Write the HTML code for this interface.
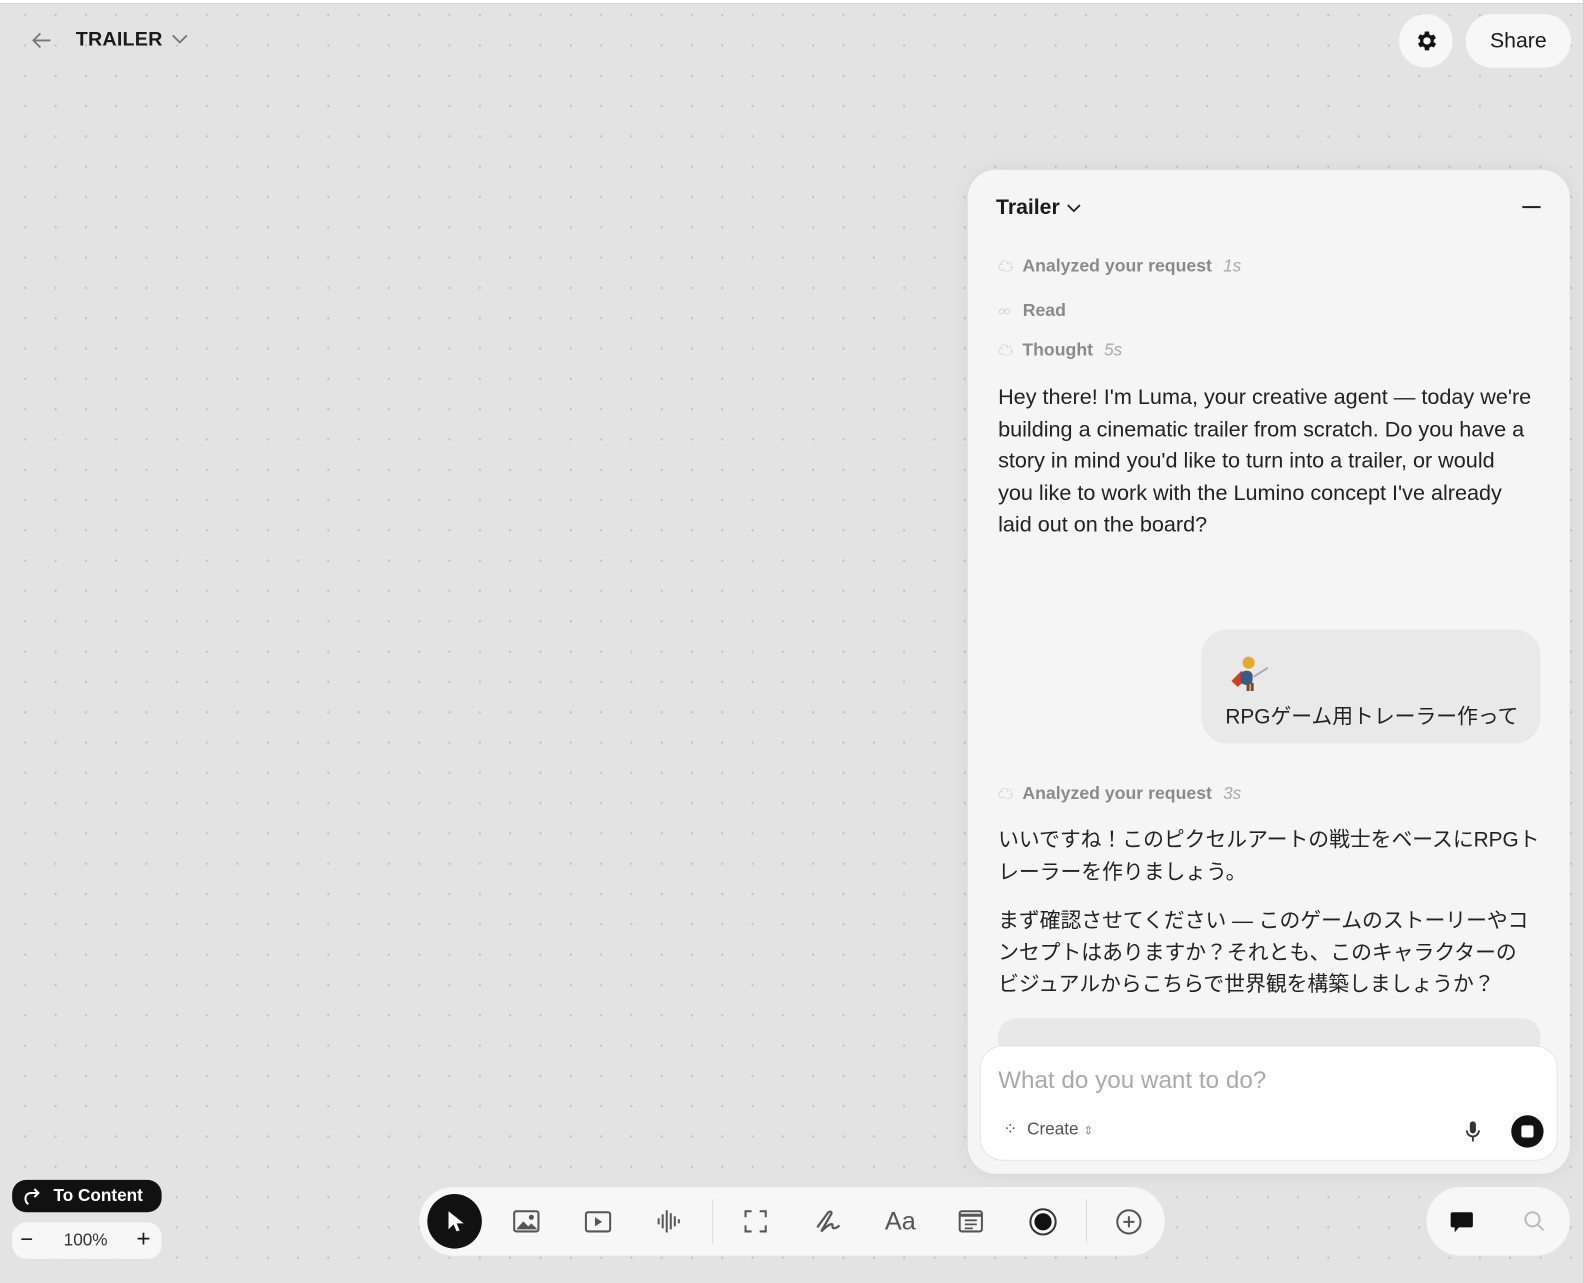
<!DOCTYPE html>
<html><head><meta charset="utf-8"><style>
*{box-sizing:border-box;margin:0;padding:0}
body{width:1584px;height:1270px;overflow:hidden;background:#e3e3e3;font-family:"Liberation Sans","Noto Sans CJK JP",sans-serif;position:relative;color:#1a1a1a}
#w{position:absolute;left:0;top:0;width:1568px;height:1257px;transform:scale(1.0102);transform-origin:0 0}
.dots{position:absolute;inset:0;background-image:radial-gradient(circle,#c4c4c4 1px,transparent 1.3px);background-size:30px 30px;background-position:10px 0px}
.topline{position:absolute;left:0;top:0;width:1568px;height:4px;background:#fff;border-bottom:1px solid #cfcfcf}
.rside{position:absolute;left:1567px;top:0;width:20px;height:1270px;background:#e3e3e3;border-left:1px solid #cfcfcf}
.abs{position:absolute}
.panel{left:958px;top:168px;width:596px;height:994px;background:#f5f5f5;border-radius:28px;box-shadow:0 0 20px rgba(0,0,0,.06)}
.meta{color:#8a8a8a;font-size:17.5px;display:flex;align-items:center;gap:9px;font-weight:700}
.meta i{font-style:italic;color:#aaa;font-size:17px;margin-left:2px;font-weight:400}
.p{font-size:20.6px;line-height:31.5px;color:#222}
.en{font-size:21.4px;white-space:nowrap}
.pill{background:#f7f7f7;border-radius:26px}
.tb svg{position:absolute}
</style></head><body>
<div id="w">
<div class="dots"></div>
<div class="topline"></div>

<svg class="abs" style="left:30px;top:30px" width="22" height="20" viewBox="0 0 22 20"><path d="M20 10H3M10 3L3 10l7 7" fill="none" stroke="#777" stroke-width="1.8"/></svg>
<div class="abs" style="left:75px;top:28px;font-size:19.5px;font-weight:700;letter-spacing:.2px">TRAILER</div>
<svg class="abs" style="left:169px;top:33px" width="18" height="12" viewBox="0 0 18 12"><path d="M2 2l7 7 7-7" fill="none" stroke="#777" stroke-width="1.8"/></svg>

<div class="abs pill" style="left:1385px;top:14px;width:53px;height:53px;border-radius:50%"></div>
<svg class="abs" style="left:1399px;top:28px" width="25" height="25" viewBox="0 0 24 24"><path fill="#111" d="M19.4 13a7.5 7.5 0 000-2l2.1-1.6-2-3.5-2.5 1a7.4 7.4 0 00-1.7-1L15 3h-4l-.4 2.7a7.4 7.4 0 00-1.7 1l-2.5-1-2 3.5L6.6 11a7.5 7.5 0 000 2l-2.1 1.6 2 3.5 2.5-1a7.4 7.4 0 001.7 1L11 21h4l.4-2.7a7.4 7.4 0 001.7-1l2.5 1 2-3.5zM13 15.5A3.5 3.5 0 1113 8.5a3.5 3.5 0 010 7z"/></svg>
<div class="abs pill" style="left:1451px;top:14px;width:104px;height:53px;font-size:21px;line-height:53px;text-align:center">Share</div>

<div class="abs panel"></div>
<div class="abs" style="left:986px;top:194px;font-size:21px;font-weight:700">Trailer</div>
<svg class="abs" style="left:1055px;top:200px" width="16" height="12" viewBox="0 0 16 12"><path d="M2 3l6 6 6-6" fill="none" stroke="#222" stroke-width="1.8"/></svg>
<div class="abs" style="left:1507px;top:204px;width:18px;height:2px;background:#222"></div>

<div class="abs meta" style="left:988px;top:253px"><span style="font-size:15px;color:#bbb;font-weight:400">☁</span>Analyzed your request<i>1s</i></div>
<div class="abs meta" style="left:988px;top:297px"><span style="font-size:12px;color:#bbb;letter-spacing:-2px;font-weight:400">○○</span>&nbsp;Read</div>
<div class="abs meta" style="left:988px;top:336px"><span style="font-size:15px;color:#bbb;font-weight:400">☁</span>Thought<i>5s</i></div>

<div class="abs p en" style="left:988px;top:378px">Hey there! I'm Luma, your creative agent — today we're<br>building a cinematic trailer from scratch. Do you have a<br>story in mind you'd like to turn into a trailer, or would<br>you like to work with the Lumino concept I've already<br>laid out on the board?</div>

<div class="abs" style="left:1189px;top:623px;width:336px;height:113px;background:#e9e9e9;border-radius:26px"></div>
<svg class="abs" style="left:1213px;top:644px" width="46" height="42" viewBox="0 0 46 42"><path d="M6 30l10-10 4 10-8 6z" fill="#c8431e"/><rect x="15" y="20" width="12" height="14" rx="5" fill="#3a5a8a"/><circle cx="23" cy="12" r="6" fill="#e8a838"/><rect x="21" y="32" width="3" height="8" fill="#7a4a22"/><rect x="25" y="32" width="3" height="8" fill="#7a4a22"/><path d="M28 26l14-9" stroke="#aab" stroke-width="2"/></svg>
<div class="abs" style="left:1213px;top:692px;font-size:20.6px;color:#222">RPGゲーム用トレーラー作って</div>

<div class="abs meta" style="left:988px;top:775px"><span style="font-size:15px;color:#bbb;font-weight:400">☁</span>Analyzed your request<i>3s</i></div>
<div class="abs p" style="left:988px;top:816px;width:540px">いいですね！このピクセルアートの戦士をベースにRPGトレーラーを作りましょう。</div>
<div class="abs p" style="left:988px;top:896px;width:530px">まず確認させてください — このゲームのストーリーやコンセプトはありますか？それとも、このキャラクターのビジュアルからこちらで世界観を構築しましょうか？</div>
<div class="abs" style="left:988px;top:1008px;width:537px;height:40px;background:#e8e8e8;border-radius:18px"></div>

<div class="abs" style="left:970px;top:1035px;width:572px;height:114px;background:#fff;border-radius:22px;border:1px solid #e4e4e4"></div>
<div class="abs" style="left:988px;top:1056px;font-size:24px;color:#aaa">What do you want to do?</div>
<div class="abs" style="left:993px;top:1108px;font-size:17px;color:#555">⁘&nbsp;&nbsp;Create <span style="font-size:12px;color:#999">⇕</span></div>
<svg class="abs" style="left:1450px;top:1108px" width="16" height="24" viewBox="0 0 16 24"><rect x="5" y="2" width="6" height="12" rx="3" fill="#333"/><path d="M2 11a6 6 0 0012 0M8 17v5" stroke="#333" stroke-width="1.8" fill="none"/></svg>
<div class="abs" style="left:1496px;top:1104px;width:32px;height:32px;border-radius:50%;background:#111"></div>
<div class="abs" style="left:1506px;top:1114px;width:12px;height:12px;border-radius:2px;background:#fff"></div>

<div class="abs" style="left:12px;top:1168px;width:148px;height:32px;background:#111;border-radius:14px;color:#fff;font-size:17px;font-weight:700;line-height:32px;padding-left:41px">To Content</div>
<svg class="abs" style="left:20px;top:1173px" width="22" height="22" viewBox="0 0 22 22"><path d="M8 19c-4-3-4-10 2-11h8M14 4l4 4-4 4" fill="none" stroke="#fff" stroke-width="2"/></svg>
<div class="abs pill" style="left:12px;top:1210px;width:148px;height:36px;border-radius:14px"></div>
<div class="abs" style="left:20px;top:1214px;font-size:22px">−</div>
<div class="abs" style="left:63px;top:1218px;font-size:17px;color:#333">100%</div>
<div class="abs" style="left:135px;top:1213px;font-size:24px">+</div>

<div class="abs pill tb" style="left:415px;top:1175px;width:738px;height:68px;border-radius:34px">
<div class="abs" style="left:8px;top:7px;width:54px;height:54px;border-radius:50%;background:#111"></div>
<svg style="left:25px;top:22px" width="20" height="24" viewBox="0 0 20 24"><path d="M4 2v18l5-5 3 7 3-1-3-7h7z" fill="#fff"/></svg>
<svg style="left:92px;top:22px" width="28" height="24" viewBox="0 0 28 24"><rect x="2" y="2" width="24" height="20" rx="2" fill="none" stroke="#555" stroke-width="2"/><path d="M4 20l7-8 5 5 3-3 6 6z" fill="#555"/><circle cx="19" cy="8" r="2.5" fill="#555"/></svg>
<svg style="left:163px;top:23px" width="28" height="24" viewBox="0 0 28 24"><rect x="2" y="2" width="24" height="19" rx="2" fill="none" stroke="#555" stroke-width="2"/><path d="M11 7v9l7-4.5z" fill="#555"/></svg>
<svg style="left:235px;top:20px" width="24" height="28" viewBox="0 0 24 28"><path d="M2 11v6M6 7v14M10 3v22M14 6v16M18 9v10M22 12v4" stroke="#555" stroke-width="2"/></svg>
<div class="abs" style="left:290px;top:12px;width:1px;height:44px;background:#ddd"></div>
<svg style="left:321px;top:22px" width="24" height="24" viewBox="0 0 24 24"><path d="M2 8V2h6M16 2h6v6M22 16v6h-6M8 22H2v-6" fill="none" stroke="#555" stroke-width="2"/></svg>
<svg style="left:391px;top:20px" width="28" height="28" viewBox="0 0 28 28"><path d="M3 20L14 5c3-2 4 1 2 3L7 24c6-6 12-10 11-5 0 3 4 2 7-1" fill="none" stroke="#555" stroke-width="2.2"/></svg>
<div class="abs" style="left:461px;top:20px;font-size:25px;color:#555">Aa</div>
<svg style="left:533px;top:22px" width="26" height="24" viewBox="0 0 26 24"><rect x="2" y="2" width="22" height="20" rx="2" fill="none" stroke="#555" stroke-width="2"/><path d="M2 6h22" stroke="#555" stroke-width="3"/><path d="M7 11h12M7 15h12M7 19h8" stroke="#555" stroke-width="1.8"/></svg>
<div class="abs" style="left:604px;top:21px;width:27px;height:27px;border-radius:50%;border:2px solid #333"></div>
<div class="abs" style="left:609px;top:26px;width:17px;height:17px;border-radius:50%;background:#111"></div>
<div class="abs" style="left:660px;top:12px;width:1px;height:44px;background:#ddd"></div>
<svg style="left:689px;top:21px" width="27" height="27" viewBox="0 0 27 27"><circle cx="13.5" cy="13.5" r="11.5" fill="none" stroke="#555" stroke-width="2"/><path d="M13.5 8v11M8 13.5h11" stroke="#555" stroke-width="2"/></svg>
</div>

<div class="abs pill" style="left:1412px;top:1175px;width:142px;height:68px;border-radius:34px"></div>
<svg class="abs" style="left:1434px;top:1197px" width="26" height="26" viewBox="0 0 26 26"><path d="M4 3h18a2 2 0 012 2v11a2 2 0 01-2 2H10l-4 5v-5H4a2 2 0 01-2-2V5a2 2 0 012-2z" fill="#111"/></svg>
<svg class="abs" style="left:1507px;top:1197px" width="24" height="24" viewBox="0 0 24 24"><circle cx="10" cy="10" r="7" fill="none" stroke="#bbb" stroke-width="2"/><path d="M15 15l6 6" stroke="#bbb" stroke-width="2"/></svg>

<div class="rside"></div>
</div>
</body></html>
